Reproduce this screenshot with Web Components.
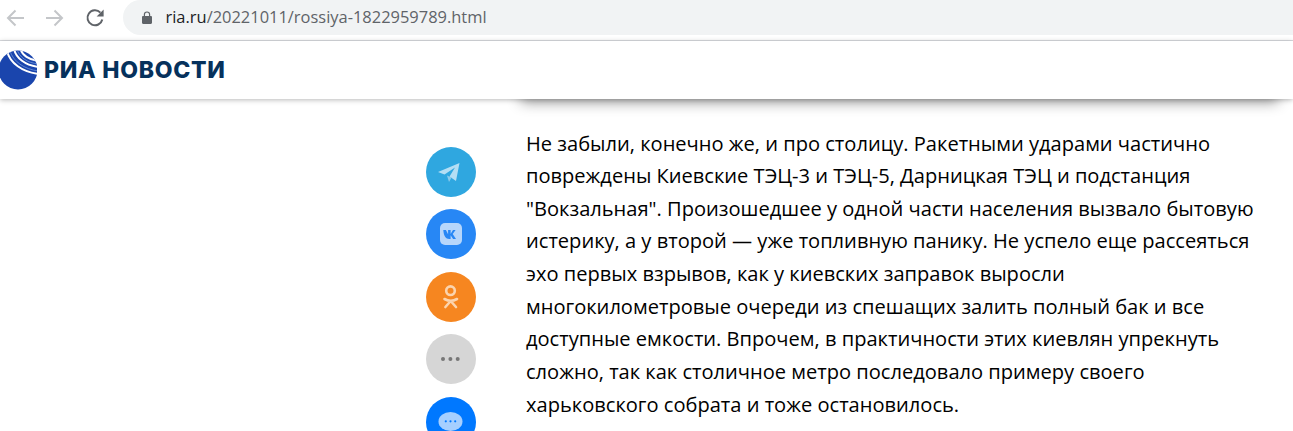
<!DOCTYPE html>
<html lang="ru"><head><meta charset="utf-8"><title>РИА Новости</title>
<style>
html,body{margin:0;padding:0;background:#fff;overflow:hidden;height:431px}
body{font-family:"Open Sans",sans-serif}
</style></head><body>
<browser-bar url-host="ria.ru" url-path="/20221011/rossiya-1822959789.html"></browser-bar>
<site-header></site-header>
<article-view>
  <share-rail slot="rail">
    <share-button kind="telegram"></share-button>
    <share-button kind="vk"></share-button>
    <share-button kind="ok"></share-button>
    <share-button kind="more"></share-button>
    <share-button kind="messenger"></share-button>
  </share-rail>
  Не забыли, конечно же, и про столицу. Ракетными ударами частично<br>повреждены Киевские ТЭЦ-3 и ТЭЦ-5, Дарницкая ТЭЦ и подстанция<br>"Вокзальная". Произошедшее у одной части населения вызвало бытовую<br>истерику, а у второй — уже топливную панику. Не успело еще рассеяться<br>эхо первых взрывов, как у киевских заправок выросли<br>многокилометровые очереди из спешащих залить полный бак и все<br>доступные емкости. Впрочем, в практичности этих киевлян упрекнуть<br>сложно, так как столичное метро последовало примеру своего<br>харьковского собрата и тоже остановилось.
</article-view>
<script>
function def(name,css,html){
  customElements.define(name,class extends HTMLElement{
    connectedCallback(){
      if(this.shadowRoot)return;
      const r=this.attachShadow({mode:'open'});
      r.innerHTML='<style>'+css+'</style>'+(typeof html==='function'?html(this):html);
    }
  });
}
def('browser-bar',`
:host{display:flex;align-items:center;height:41px;box-sizing:border-box;background:#fff;border-bottom:1px solid #dadce0}
.nav{display:flex;align-items:center;gap:18px;padding-left:4px;width:118px;box-sizing:border-box;flex:none;margin-top:-5px}
svg{display:block}
.omni{flex:1;height:35px;margin-top:-5px;margin-left:5px;background:#f1f3f4;border-radius:18px 0 0 18px;display:flex;align-items:center;padding-left:17.5px;font:16.450px/1 "Open Sans",sans-serif;color:#5f6368}
.omni b{font-weight:400;color:#202124}
.omni svg{margin-right:13px}
`,el=>`
<div class="nav">
<svg width="22" height="22" viewBox="0 0 22 22" fill="none" stroke="#c4c6c9" stroke-width="2"><path d="M20 11H4M11.500 3.500 4 11l7.500 7.500"/></svg>
<svg width="22" height="22" viewBox="0 0 22 22" fill="none" stroke="#c4c6c9" stroke-width="2"><path d="M2 11h16M10.500 3.500 18 11l-7.500 7.500"/></svg>
<svg width="22" height="22" viewBox="0 0 22 22"><path fill="none" stroke="#5f6368" stroke-width="2" d="M18.300 12.500A7.500 7.500 0 1 1 16.400 5.600"/><path fill="#5f6368" d="M19.600 2.500v7h-7z"/></svg>
</div>
<div class="omni">
<svg width="12" height="14" viewBox="0 0 12 14"><path fill="#5f6368" d="M2.800 5V3.600a3.200 3.200 0 0 1 6.400 0V5h.6c.7 0 1.200.5 1.200 1.200v5.600c0 .7-.5 1.200-1.200 1.200H2.200C1.500 13 1 12.500 1 11.800V6.200C1 5.500 1.500 5 2.200 5zM4 5h4V3.600a2 2 0 0 0-4 0z"/></svg>
<span><b>${el.getAttribute('url-host')}</b>${el.getAttribute('url-path')}</span>
</div>`);
def('site-header',`
:host{display:flex;align-items:center;height:58px;background:#fff;box-shadow:0 1px 5px rgba(0,0,0,.28);position:relative;z-index:2}
svg{display:block;flex:none;margin-top:-1px}
.t{font:800 23px/1 Inter,"Liberation Sans",sans-serif;color:#06315c;margin-left:7px;margin-top:1px;letter-spacing:.72px;white-space:nowrap}
`,`
<svg width="37" height="40" viewBox="0 0 37 40">
<defs><clipPath id="c"><circle cx="18" cy="20" r="19.500"/></clipPath></defs>
<g clip-path="url(#c)">
<rect x="-2" y="0" width="41" height="40" fill="#1a45ad"/>
<g fill="none" stroke="#fff" stroke-width="2">
<path d="M7 1C10 13 22 22 39 24"/>
<path d="M14 -1C16 8 25 15.500 39 17"/>
<path d="M20.500 -1C22 5 29 10 39 11"/>
<path d="M27 -1C28 2 32 5 39 5.500"/>
</g>
<g fill="none" stroke="#6f96dc" stroke-width=".8"><path d="M10 1C13 11 24 19.500 39 21"/><path d="M17 -1C19 7 27 13 39 14"/></g>
</g></svg>
<div class="t">РИА НОВОСТИ</div>`);
def('article-view',`
:host{display:flex;position:relative;height:332px;overflow:hidden}
.rail{flex:none;width:526px;box-sizing:border-box;padding:47.700px 0 0 426px}
.shade{position:absolute;left:522px;right:16px;top:-12px;height:12px;box-shadow:0 2px 14px 1px rgba(0,0,0,.42)}
.text{flex:1;padding-top:28.500px;font:20.080px/32.620px "Open Sans",sans-serif;color:#000;white-space:nowrap}
`,`
<div class="shade"></div>
<div class="rail"><slot name="rail"></slot></div>
<div class="text"><slot></slot></div>`);
def('share-rail',`
:host{display:flex;flex-direction:column;gap:12.500px;width:50px}
`,`<slot></slot>`);
const icons={
telegram:['#2fa7e0',`<path fill="#b4def4" d="M12 25 33.500 16 30 34l-6.500-4.500L29 20.500 18.500 27.500z"/><path fill="#8ecbea" d="M21 28.500l2 6.500 2.500-4.500z"/>`],
vk:['#2787f5',`<rect x="14" y="14" width="22" height="22" rx="5" fill="#b6d6fb"/><path fill="#2787f5" d="M17.300 21h2.600l2.200 4.300V21h2.500v3.900l2.400-3.900h2.600l-2.900 4 3.300 5h-2.900l-2.500-3.800V30h-1.300c-3.500 0-5.600-3-6-9z"/>`],
ok:['#f68620',`<circle cx="24.500" cy="18.700" r="4.300" fill="none" stroke="#fbd4ae" stroke-width="2.600"/><path fill="none" stroke="#fbd4ae" stroke-width="2.600" stroke-linecap="round" d="M18.500 27c4 2.300 8.500 2.300 12.500 0M24.700 29l-5.300 6M24.700 29l5.300 6"/>`],
more:['#d6d6d6',`<circle cx="17" cy="25" r="2" fill="#777"/><circle cx="24.400" cy="25" r="2" fill="#777"/><circle cx="31.700" cy="25" r="2" fill="#777"/>`],
messenger:['#0078ff',`<ellipse cx="24.500" cy="24.500" rx="12" ry="9.500" fill="#a6cfff"/><circle cx="19.800" cy="24.300" r="1.100" fill="#0078ff"/><circle cx="24.500" cy="24.300" r="1.100" fill="#0078ff"/><circle cx="29.200" cy="24.300" r="1.100" fill="#0078ff"/>`]
};
def('share-button',`
:host{display:block;width:50px;height:50px;flex:none}
svg{display:block}
`,el=>{const k=icons[el.getAttribute('kind')];return `<svg width="50" height="50" viewBox="0 0 50 50"><circle cx="25" cy="25" r="25" fill="${k[0]}"/>${k[1]}</svg>`});
</script>
</body></html>
